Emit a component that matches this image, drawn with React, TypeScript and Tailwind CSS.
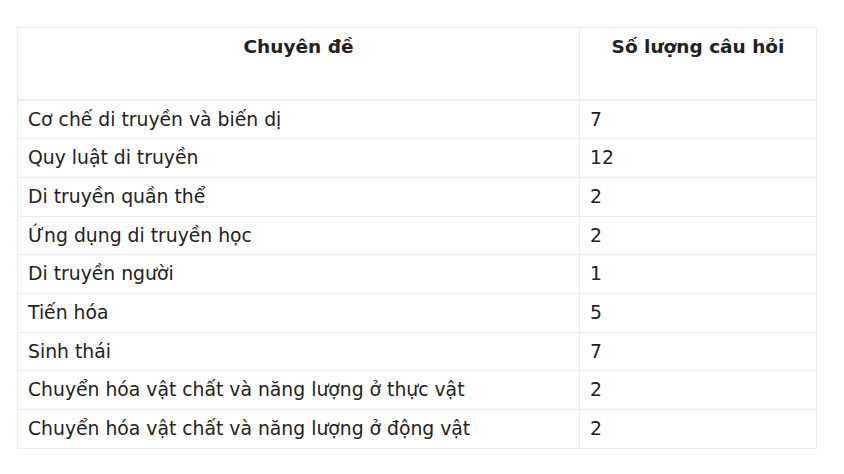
import React from "react";

const rows: [string, string][] = [
  ["Cơ chế di truyền và biến dị", "7"],
  ["Quy luật di truyền", "12"],
  ["Di truyền quần thể", "2"],
  ["Ứng dụng di truyền học", "2"],
  ["Di truyền người", "1"],
  ["Tiến hóa", "5"],
  ["Sinh thái", "7"],
  ["Chuyển hóa vật chất và năng lượng ở thực vật", "2"],
  ["Chuyển hóa vật chất và năng lượng ở động vật", "2"],
];

export default function App() {
  return (
    <div
      className="bg-white w-[844px] h-[474px] pt-[27px] pl-[17px] text-[#222]"
      style={{ fontFamily: '"DejaVu Sans", Verdana, sans-serif' }}
    >
      <table className="border-collapse w-[799px] text-[18.8px] table-fixed">
        <colgroup>
          <col className="w-[562px]" />
          <col className="w-[237px]" />
        </colgroup>
        <thead>
          <tr>
            <th className="border border-[#ebebeb] border-b-2 h-[72px] align-top pt-[8px] px-[10px] font-bold text-center text-[18.5px] leading-[22px]">
              Chuyên đề
            </th>
            <th className="border border-[#ebebeb] border-b-2 h-[72px] align-top pt-[8px] px-[10px] font-bold text-center text-[18.5px] leading-[22px]">
              Số lượng câu hỏi
            </th>
          </tr>
        </thead>
        <tbody>
          {rows.map(([a, b], i) => (
            <tr key={i}>
              <td className="border border-[#ebebeb] px-[10px] py-[8px] leading-[21.7px] align-middle">
                {a}
              </td>
              <td className="border border-[#ebebeb] px-[10px] py-[8px] leading-[21.7px] align-middle">
                {b}
              </td>
            </tr>
          ))}
        </tbody>
      </table>
    </div>
  );
}
